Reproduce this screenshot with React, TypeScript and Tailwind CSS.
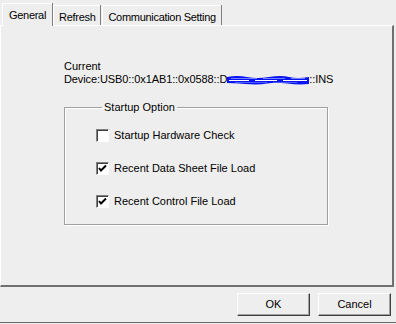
import React from "react";

const tabs = ["General", "Refresh", "Communication Setting"];

const options = [
    { label: "Startup Hardware Check", checked: false },
    { label: "Recent Data Sheet File Load", checked: true },
    { label: "Recent Control File Load", checked: true },
];

export default function App() {
    return (
        <div
            className="w-[396px] h-[324px] bg-[#efeeee] text-black text-[11px] leading-[13px] flex flex-col overflow-hidden"
            style={{ fontFamily: '"Liberation Sans", Arial, sans-serif' }}
        >
            {/* ── Tab strip ─────────────────────────── */}
            <div className="h-[25px] flex items-end pl-[2px] shrink-0 tracking-[-0.3px]">
                {tabs.map((tab, i) =>
                    i === 0 ? (
                        <div
                            key={tab}
                            className="relative z-10 -mb-px h-[23px] px-[6px] pt-[5px] bg-[#efeeee] border-l border-t border-white shadow-[1px_0_0_#808080] mr-px"
                        >
                            {tab}
                        </div>
                    ) : (
                        <div
                            key={tab}
                            className="h-[20px] px-[5px] pt-[5px] border-l border-t border-white shadow-[1px_0_0_#808080] mr-[2px]"
                        >
                            {tab}
                        </div>
                    )
                )}
            </div>

            {/* ── Panel ─────────────────────────────── */}
            <div className="w-[394px] h-[262px] shrink-0 border-t border-l border-white border-r-2 border-b-2 border-r-[#707070] border-b-[#707070] pt-[34px] pl-[63px]">
                <p>Current</p>
                <p className="flex items-center whitespace-nowrap tracking-[-0.1px]">
                    <span>Device:USB0::0x1AB1::0x0588::D</span>
                    <Scribble />
                    <span>::INS</span>
                </p>

                <fieldset className="mt-[15px] w-[264px] h-[124px] border border-[#a0a0a0] shadow-[inset_1px_1px_0_#ffffff,1px_1px_0_#ffffff] pl-[31px] pt-[5px]">
                    <legend className="ml-[6px] px-[2px]">Startup Option</legend>
                    {options.map((opt) => (
                        <div key={opt.label} className="h-[33px] flex items-center gap-[5px]">
                            <CheckBox checked={opt.checked} />
                            <span>{opt.label}</span>
                        </div>
                    ))}
                </fieldset>
            </div>

            {/* ── Buttons ───────────────────────────── */}
            <div className="flex justify-end gap-[8px] pr-[5px] pt-[6px] h-[36px] shrink-0 border-b border-[#6a6a6a]">
                <Button label="OK" />
                <Button label="Cancel" />
            </div>
        </div>
    );
}

// ── Sub-components ──────────────────────────────────────────────────

function CheckBox({ checked }: { checked: boolean }) {
    return (
        <span className="w-[13px] h-[13px] shrink-0 bg-white border border-t-[#808080] border-l-[#808080] border-r-white border-b-white shadow-[inset_1px_1px_0_#404040] flex items-center justify-center">
            {checked && (
                <svg width="9" height="9" viewBox="0 0 9 9">
                    <path d="M1 4 L3 6.5 L8 1.5" fill="none" stroke="#000" strokeWidth="2" />
                </svg>
            )}
        </span>
    );
}

function Button({ label }: { label: string }) {
    return (
        <button className="w-[73px] h-[23px] bg-[#efeeee] border border-t-white border-l-white border-r-[#404040] border-b-[#404040] shadow-[inset_-1px_-1px_0_#a0a0a0] text-[11px] leading-none">
            {label}
        </button>
    );
}

function Scribble() {
    return (
        <svg width="82" height="10" viewBox="0 0 82 10" className="shrink-0">
            <path d="M0 2 Q10 0 20 2 T42 2 T62 2 T82 2 V9 Q72 10 60 8.5 T40 8.5 T18 9 T0 8 Z" fill="#0a14f0" />
            <path d="M4 3.5 H30 M36 3.5 H58 M64 3.5 H78" stroke="#7080ff" strokeWidth="1" />
            <path d="M2 5.5 H22 M28 5.5 H50 M56 5.5 H80" stroke="#ffffff" strokeWidth="1" />
            <path d="M8 7.5 H40 M46 7.5 H70" stroke="#4a5cff" strokeWidth="1" />
        </svg>
    );
}
